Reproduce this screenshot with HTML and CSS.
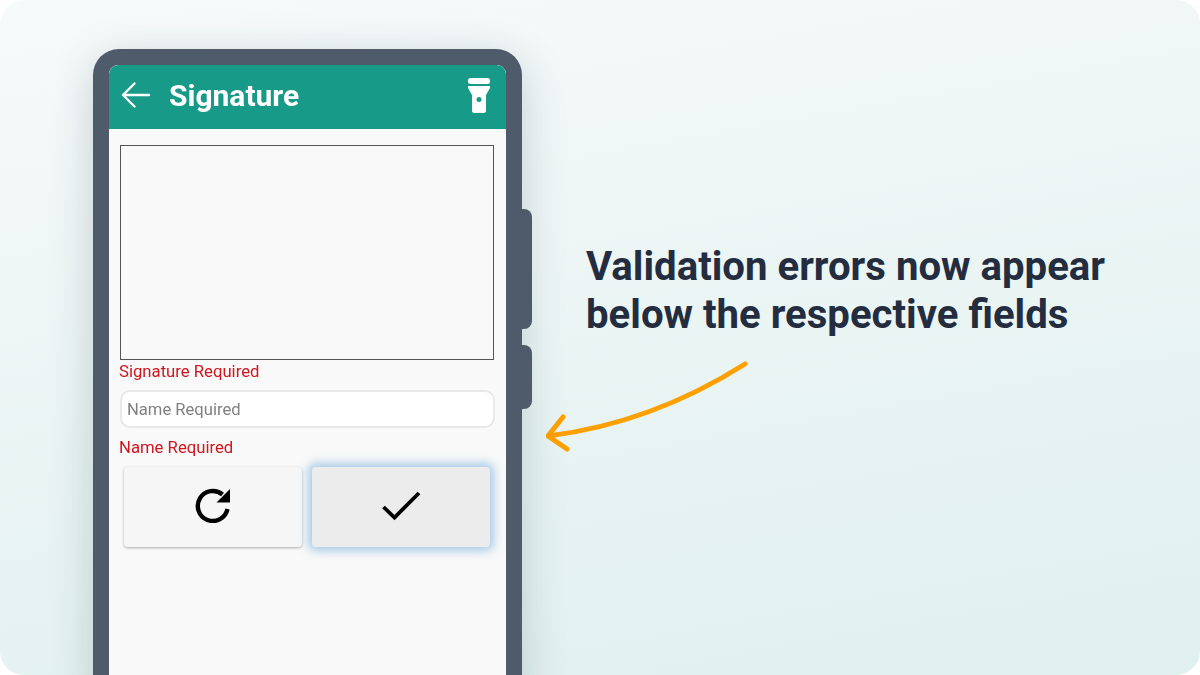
FILE: index.html
```html
<!DOCTYPE html>
<html lang="en">
<head>
    <meta charset="UTF-8">
    <meta name="viewport" content="width=device-width, initial-scale=1.0">
    <title>Signature validation</title>
    <link rel="stylesheet" href="styles.css">
</head>
<body>

    <div class="slide">
        <div class="phone">
            <span class="side-btn side-btn-long"></span>
            <span class="side-btn side-btn-short"></span>

            <div class="screen">
                <div class="app-bar">
                    <svg class="back-icon" width="30" height="26" viewBox="0 0 30 26">
                        <path d="M28 13H2M13.500 1.500L2 13l11.500 11.500" fill="none" stroke="#fff" stroke-width="2.400" stroke-linecap="round" stroke-linejoin="round"/>
                    </svg>
                    <h1 class="app-title">Signature</h1>
                    <svg class="torch-icon" width="22" height="35" viewBox="0 0 22 35">
                        <rect x="0" y="0" width="22" height="6" rx="2.500" fill="#fff"/>
                        <path d="M0 8h22v2l-4 7v15.500a2.500 2.500 0 0 1-2.500 2.500h-9A2.500 2.500 0 0 1 4 32.500V17L0 10z" fill="#fff"/>
                        <circle cx="11" cy="21.500" r="2.500" fill="#179a88"/>
                    </svg>
                </div>

                <div class="form-body">
                    <div class="signature-box"></div>
                    <p class="error-text error-signature">Signature Required</p>
                    <input class="name-input" type="text" placeholder="Name Required">
                    <p class="error-text error-name">Name Required</p>

                    <div class="button-row">
                        <button class="action-btn" type="button">
                            <svg width="36" height="36" viewBox="0 0 36 36">
                                <path d="M27.500 7.500A15 15 0 1 0 32.500 22" fill="none" stroke="#000" stroke-width="4.400"/>
                                <path d="M35 2V15.500H21.500z" fill="#000"/>
                            </svg>
                        </button>
                        <button class="action-btn action-btn-focus" type="button">
                            <svg width="40" height="32" viewBox="0 0 40 32">
                                <path d="M2.500 18L13.500 28.500 38 4" fill="none" stroke="#000" stroke-width="3.800"/>
                            </svg>
                        </button>
                    </div>
                </div>
            </div>
        </div>

        <div class="caption">
            <h2 class="caption-title">Validation errors now appear below the respective fields</h2>
            <svg class="arrow" width="210" height="100" viewBox="0 0 210 100">
                <path d="M199 4C150 35 84 66 2 76M17 57L2 76 21 89" fill="none" stroke="#ffa000" stroke-width="5" stroke-linecap="round" stroke-linejoin="round"/>
            </svg>
        </div>
    </div>

</body>
</html>
```

FILE: styles.css
```css
html, body {
    margin: 0;
    padding: 0;
    background-color: white;
}

.slide {
    width: 1200px;
    height: 675px;
    box-sizing: border-box;
    display: flex;
    align-items: flex-start;
    padding: 49px 0 0 93px;
    overflow: hidden;
    border-radius: 24px;
    background: linear-gradient(170deg, #f7fafa 0%, #e9f4f3 55%, #e0f0ee 100%);
    font-family: Roboto, "Liberation Sans", sans-serif;
}

.phone {
    position: relative;
    flex: none;
    width: 429px;
    height: 700px;
    box-sizing: border-box;
    padding: 16px;
    background-color: #4f5b6b;
    border-radius: 26px;
    box-shadow: 0 10px 44px rgba(40, 70, 80, 0.22);
}

.side-btn {
    position: absolute;
    left: 100%;
    width: 10px;
    background-color: #4f5b6b;
    border-radius: 0 8px 8px 0;
}

.side-btn-long {
    top: 160px;
    height: 120px;
}

.side-btn-short {
    top: 296px;
    height: 64px;
}

.screen {
    height: 100%;
    background-color: #f9f9f9;
    border-radius: 9px 9px 0 0;
    overflow: hidden;
    filter: blur(0.4px);
}

.app-bar {
    height: 64px;
    box-sizing: border-box;
    display: flex;
    align-items: center;
    padding: 0 16px 4px 12px;
    background-color: #179a88;
    border-radius: 9px 9px 0 0;
}

.back-icon {
    flex: none;
}

.app-title {
    flex: 1;
    margin: 0 0 0 18px;
    color: white;
    font-size: 30px;
    font-weight: 700;
}

.torch-icon {
    flex: none;
}

.form-body {
    padding: 16px 12px 0 11px;
}

.signature-box {
    height: 213px;
    border: 1px solid #555;
    background-color: #f9f9f9;
}

.error-text {
    margin: 0 0 0 -1px;
    color: #d0161f;
    font-size: 16.700px;
    line-height: 20px;
}

.error-signature {
    margin-top: 2px;
}

.name-input {
    display: block;
    width: calc(100% + 1px);
    height: 38px;
    box-sizing: border-box;
    margin-top: 8px;
    padding: 0 5px;
    border: 2px solid #e8e8e8;
    border-radius: 10px;
    background-color: white;
    font-family: inherit;
    font-size: 16.600px;
}

.name-input::placeholder {
    color: #808080;
    opacity: 1;
}

.error-name {
    margin-top: 10px;
}

.button-row {
    display: flex;
    gap: 10px;
    margin-top: 9px;
    padding: 0 4px;
}

.action-btn {
    flex: 1;
    height: 80px;
    display: flex;
    align-items: center;
    justify-content: center;
    padding: 0 0 4px;
    border: none;
    border-radius: 4px;
    background-color: #f6f6f6;
    box-shadow: 0 1px 3px rgba(0, 0, 0, 0.3);
}

.action-btn-focus {
    background-color: #ececec;
    box-shadow: 0 0 10px 4px rgba(90, 160, 215, 0.5);
}

.caption {
    flex: 1;
    padding: 194px 0 0 64px;
}

.caption-title {
    width: 560px;
    margin: 0;
    color: #232d3f;
    font-size: 40.150px;
    line-height: 48px;
    font-weight: 700;
}

.arrow {
    display: block;
    margin: 21px 0 0 -40px;
}
```
